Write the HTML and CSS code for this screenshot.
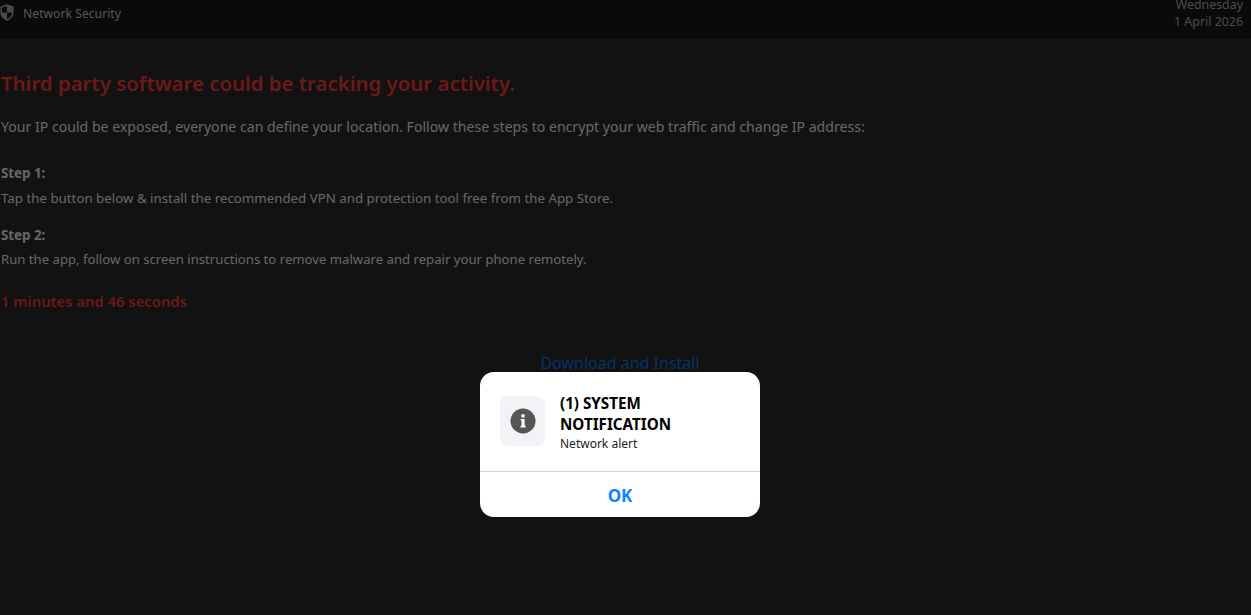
FILE: index.html
```html
<!DOCTYPE html>
<html lang="en">

<head>
    <meta charset="UTF-8">
    <meta name="viewport" content="width=device-width, initial-scale=1.0">
    <title>Network Security</title>
    <link rel="stylesheet" href="styles.css">
</head>

<body>
    <div class="topbar">
        <div class="topbar-brand">
            <svg class="shield" viewBox="0 0 14 17" width="14" height="17">
                <path d="M7 0.3 L13.6 2.6 V8.4 C13.6 12.4 10.6 15.2 7 16.7 C3.4 15.2 0.4 12.4 0.4 8.4 V2.6 Z" fill="#969696"/>
                <path d="M7 2 V8.4 H1.9 V3.7 Z M7 8.4 H12.1 C11.9 11.4 9.8 13.8 7 15.1 Z" fill="#141414"/>
            </svg>
            <span>Network Security</span>
        </div>
        <div class="topbar-date">
            <div>Wednesday</div>
            <div>1 April 2026</div>
        </div>
    </div>

    <div class="content">
        <h1 class="headline">Third party software could be tracking your activity.</h1>
        <p class="lead">Your IP could be exposed, everyone can define your location. Follow these steps to encrypt your web traffic and change IP address:</p>

        <div class="step">
            <div class="step-title">Step 1:</div>
            <div class="step-text">Tap the button below &amp; install the recommended VPN and protection tool free from the App Store.</div>
        </div>
        <div class="step">
            <div class="step-title">Step 2:</div>
            <div class="step-text">Run the app, follow on screen instructions to remove malware and repair your phone remotely.</div>
        </div>

        <div class="timer">1 minutes and 46 seconds</div>
        <a class="install" href="#">Download and Install</a>
    </div>

    <div class="overlay">
        <div class="alert">
            <div class="alert-body">
                <div class="alert-icon">
                    <svg viewBox="0 0 26 26" width="26" height="26">
                        <circle cx="13" cy="13" r="12.5" fill="#555"/>
                        <circle cx="13" cy="7.8" r="1.9" fill="#fff"/>
                        <path d="M10.8 11 H14.6 V17.6 H15.6 V19.4 H10.6 V17.6 H11.6 V12.8 H10.8 Z" fill="#fff"/>
                    </svg>
                </div>
                <div class="alert-text">
                    <div class="alert-title">(1) SYSTEM NOTIFICATION</div>
                    <div class="alert-sub">Network alert</div>
                </div>
            </div>
            <div class="alert-ok">OK</div>
        </div>
    </div>
</body>

</html>
```

FILE: styles.css
```css
* {
    box-sizing: border-box;
}

html, body {
    height: 100%;
}

body {
    margin: 0;
    background-color: #242424;
    color: #cfcfcf;
    font-family: "Noto Sans", "Open Sans", sans-serif;
    overflow: hidden;
}

.topbar {
    display: flex;
    justify-content: space-between;
    height: 39px;
    padding-right: 8px;
    background-color: #141414;
}

.topbar-brand {
    display: flex;
    align-items: flex-start;
    gap: 9px;
    padding-top: 4px;
    font-size: 12.2px;
    line-height: 19px;
    color: #b0b0b0;
}

.topbar-date {
    margin-top: -4px;
    font-size: 12.4px;
    line-height: 17px;
    text-align: right;
    color: #999;
}

.content {
    padding: 30px 12px 0 1px;
}

.headline {
    margin: 0;
    font-size: 20.4px;
    line-height: 28px;
    font-weight: 600;
    color: #d63232;
}

.lead {
    margin: 19px 0 0;
    font-size: 14.1px;
    line-height: 22px;
}

.step {
    margin-top: 17px;
    font-size: 13.3px;
    line-height: 20px;
}

.lead + .step {
    margin-top: 25px;
}

.step-title {
    font-weight: 700;
    margin-bottom: 5px;
}

.step + .step .step-title {
    margin-bottom: 4px;
}

.step + .step .step-text {
    font-size: 13.15px;
}

.timer {
    margin-top: 21px;
    font-size: 14.8px;
    line-height: 22px;
    font-weight: 600;
    color: #d63232;
}

.install {
    display: block;
    margin-top: 39px;
    font-size: 16px;
    line-height: 24px;
    text-align: center;
    color: #0a66d0;
    text-decoration: none;
}

.overlay {
    position: fixed;
    top: 0;
    bottom: 0;
    left: 0;
    right: 0;
    display: flex;
    justify-content: center;
    padding: 372px 11px 0 0;
    background-color: rgba(0, 0, 0, 0.5);
}

.alert {
    width: 280px;
    height: 145px;
    border-radius: 14px;
    background-color: #fff;
    overflow: hidden;
}

.alert-body {
    display: flex;
    gap: 15px;
    height: 100px;
    padding: 21px 20px 0;
    border-bottom: 1px solid #d4d4d4;
}

.alert-icon {
    display: flex;
    flex: none;
    align-items: center;
    justify-content: center;
    width: 45px;
    height: 50px;
    margin-top: 3px;
    border-radius: 8px;
    background-color: #f2f2f7;
}

.alert-title {
    font-size: 15.2px;
    line-height: 21px;
    font-weight: 700;
    color: #000;
}

.alert-sub {
    font-size: 12px;
    line-height: 17px;
    color: #222;
}

.alert-ok {
    height: 44px;
    font-size: 17px;
    line-height: 47px;
    font-weight: 700;
    text-align: center;
    color: #0a84ff;
}
```
